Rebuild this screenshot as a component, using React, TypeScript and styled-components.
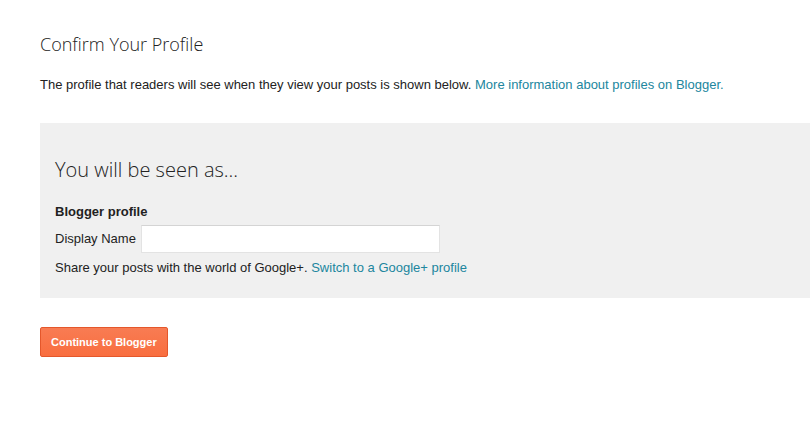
import styled, { createGlobalStyle } from "styled-components";

const GlobalStyle = createGlobalStyle`
    html, body {
        margin: 0;
        padding: 0;
        background: #fff;
    }

    body {
        font-family: "Liberation Sans", Arial, sans-serif;
        font-size: 13px;
        color: #222;
    }
`;

function App() {
    return (
        <>
            <GlobalStyle />
            <Page>
                <Title>Confirm Your Profile</Title>
                <Intro>
                    The profile that readers will see when they view your posts is shown below.{" "}
                    <Link href="#">More information about profiles on Blogger.</Link>
                </Intro>
                <Panel>
                    <PanelTitle>You will be seen as...</PanelTitle>
                    <SectionLabel>Blogger profile</SectionLabel>
                    <FieldRow>
                        <FieldLabel htmlFor="display-name">Display Name</FieldLabel>
                        <TextInput id="display-name" type="text" />
                    </FieldRow>
                    <Note>
                        Share your posts with the world of Google+.{" "}
                        <Link href="#">Switch to a Google+ profile</Link>
                    </Note>
                </Panel>
                <PrimaryButton>Continue to Blogger</PrimaryButton>
            </Page>
        </>
    );
}

export default App;

const Page = styled.div`
    padding: 32px 0 40px 40px;
`;

const Title = styled.h1`
    margin: 0 0 20px;
    font-family: "Open Sans", sans-serif;
    font-size: 18px;
    font-weight: 300;
    line-height: 24px;
    color: #222;
`;

const Intro = styled.p`
    margin: 0 0 29px;
    line-height: 18px;
`;

const Link = styled.a`
    color: #21869e;
    text-decoration: none;
`;

const Panel = styled.section`
    background: #f0f0f0;
    padding: 34px 15px 21px;
`;

const PanelTitle = styled.h2`
    margin: 0 0 20px;
    font-family: "Open Sans", sans-serif;
    font-size: 20px;
    font-weight: 300;
    line-height: 26px;
    color: #222;
`;

const SectionLabel = styled.div`
    font-weight: bold;
    line-height: 18px;
    margin-bottom: 4px;
`;

const FieldRow = styled.div`
    display: flex;
    align-items: center;
    gap: 5px;
    margin-bottom: 6px;
`;

const FieldLabel = styled.label`
    line-height: 18px;
`;

const TextInput = styled.input`
    box-sizing: border-box;
    width: 299px;
    height: 28px;
    margin: 0;
    padding: 0 6px;
    border: 1px solid #e3e3e3;
    border-top-color: #d4d4d4;
    background: #fff;
    font: inherit;
    outline: none;
`;

const Note = styled.div`
    line-height: 18px;
`;

const PrimaryButton = styled.button`
    margin-top: 29px;
    box-sizing: border-box;
    height: 30px;
    padding: 0 10px;
    border: 1px solid #e4572b;
    border-radius: 2px;
    background: linear-gradient(#f87c53, #f96e3f);
    color: #fff;
    font-family: "Liberation Sans", Arial, sans-serif;
    font-size: 11px;
    font-weight: bold;
    cursor: pointer;
`;
